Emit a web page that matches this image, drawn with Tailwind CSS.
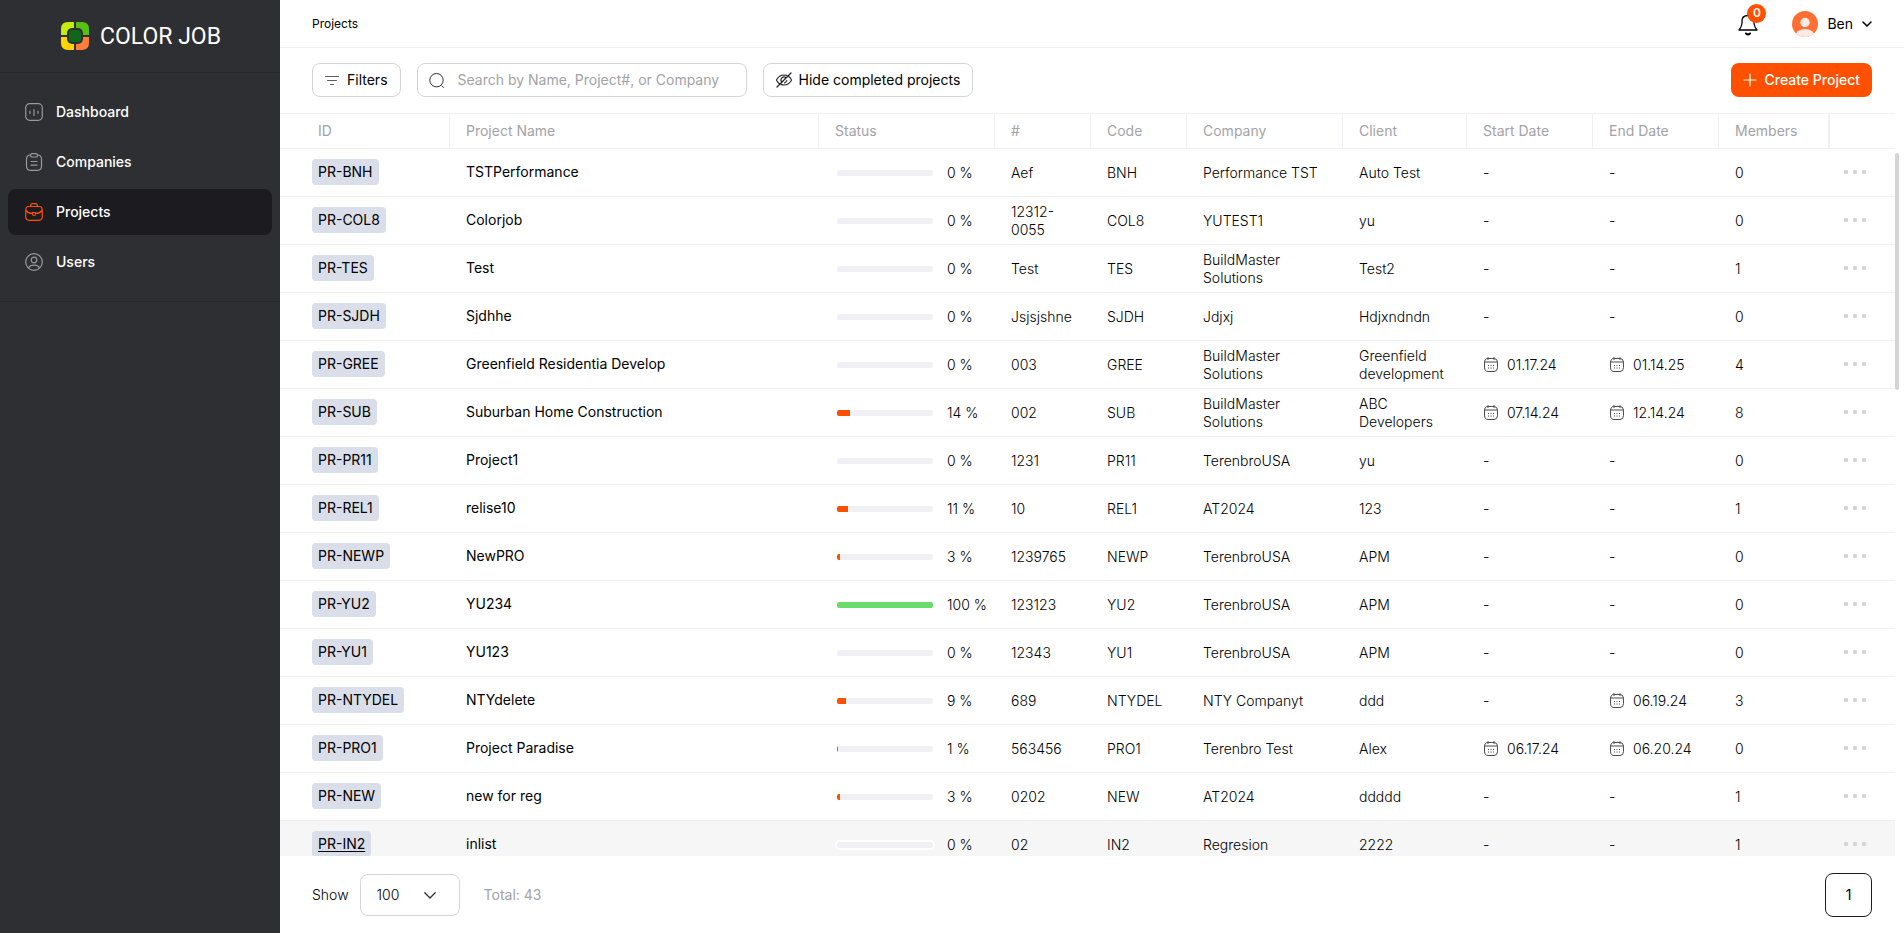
<!DOCTYPE html>
<html lang="en">
<head>
<meta charset="utf-8">
<title>Projects</title>
<script src="https://cdn.jsdelivr.net/npm/@tailwindcss/browser@4"></script>
</head>
<body class="h-screen overflow-hidden bg-white font-['Inter',sans-serif] text-sm text-black">
<svg class="hidden" aria-hidden="true">
  <symbol id="cal" viewBox="0 0 14 15" fill="none" stroke="#4a4b50" stroke-linecap="round">
    <path d="M.5 5.500Q.5 1.500 4 1.500H10Q13.500 1.500 13.500 5.500V10.500Q13.500 14.500 10 14.500H4Q.5 14.500 .5 10.500ZM.5 5H13.500M4 .5V2.500M10 .5V2.500"/>
    <path d="M4 8.500H10.500M4 11H10.500" stroke-dasharray="1 1.500" stroke-linecap="butt"/>
  </symbol>
  <symbol id="dots" viewBox="0 0 24 6" fill="#d4d4d4"><circle cx="3" cy="3" r="2.200"/><circle cx="12" cy="3" r="2.200"/><circle cx="21" cy="3" r="2.200"/></symbol>
</svg>
<div class="flex h-full">
  <aside class="flex w-[280px] shrink-0 flex-col bg-[#2e2f33]">
    <a href="#" class="flex h-[73px] items-center gap-[11px] border-b border-[#27282c] pl-[61px]">
      <svg class="size-7" viewBox="0 0 28 28" aria-hidden="true"><path fill="#c3ec13" d="M13 0H7Q0 0 0 7v6h13z"/><path fill="#56c113" d="M15 0h6q7 0 7 7v6H15z"/><path fill="#ffd400" d="M13 28H7q-7 0-7-7v-6h13z"/><path fill="#ff7f3a" d="M15 28h6q7 0 7-7v-6H15z"/><rect x="7" y="7" width="14" height="14" rx="4" fill="#10661b" stroke="#2e2f33" stroke-width="2"/></svg>
      <span class="pt-px font-['Roboto',sans-serif] text-[23px] leading-7 text-white">COLOR JOB</span>
    </a>
    <nav class="flex flex-col gap-1 border-b border-[#27282c] px-2 py-4 font-medium text-white">
      <a href="#" class="flex h-[46px] items-center gap-[13px] rounded-lg px-[17px]">
        <svg class="size-[18px]" viewBox="0 0 18 18" fill="none" stroke="#98999d" stroke-width="1.200" stroke-linecap="round"><rect x=".7" y=".7" width="16.600" height="16.600" rx="4"/><path d="M5 8v2.500M9 6.500v6M13 8v2.500"/></svg>Dashboard</a>
      <a href="#" class="flex h-[46px] items-center gap-[13px] rounded-lg px-[17px]">
        <svg class="size-[18px]" viewBox="0 0 18 18" fill="none" stroke="#98999d" stroke-width="1.200" stroke-linecap="round"><path d="M5.500 2Q1.500 2 1.500 6v7.300q0 4 4 4h7q4 0 4-4V6q0-4-4-4"/><rect x="5.500" y=".7" width="7" height="3.300" rx="1.600"/><path d="M6 8.500h6M6 12.200h6"/></svg>Companies</a>
      <a href="#" aria-current="page" class="flex h-[46px] items-center gap-[13px] rounded-lg bg-[#1c1b1f] px-[17px]">
        <svg class="size-[18px]" viewBox="0 0 18 18" fill="none" stroke="#ff5000" stroke-width="1.200" stroke-linecap="round"><path d="M.7 7.500Q.7 3.500 3.500 3.500h11q2.800 0 2.800 4v6q0 3.800-3.500 3.800H4.200Q.7 17.300.7 13.500zM5.500 3.500Q5.500.7 7.500.7h3q2 0 2 2.800M.9 7.500q2.600 3 6.300 3M17.100 7.500q-2.600 3-6.300 3"/><path d="M7.300 9.500h3.400v1.200q-.2 1.800-1.700 1.800t-1.700-1.800z"/></svg>Projects</a>
      <a href="#" class="flex h-[46px] items-center gap-[13px] rounded-lg px-[17px]">
        <svg class="size-[18px]" viewBox="0 0 18 18" fill="none" stroke="#98999d" stroke-width="1.200"><circle cx="9" cy="9" r="8.300"/><circle cx="9" cy="7" r="2.800"/><path d="M3.500 15q1.300-2.800 5.500-2.800t5.500 2.800"/></svg>Users</a>
    </nav>
  </aside>
  <main class="flex min-w-0 flex-1 flex-col">
    <header class="flex h-12 shrink-0 items-center justify-between border-b border-[#efeff1] px-8">
      <h1 class="text-xs font-normal">Projects</h1>
      <div class="flex items-center gap-[34px]">
        <button type="button" class="relative" aria-label="Notifications">
          <svg class="h-6 w-5" viewBox="0 0 20 24" fill="none" stroke="#000" stroke-width="1.300" stroke-linecap="round" stroke-linejoin="round"><path d="M1 18h18q-2.500-3-3-6.500V9q0-5.500-6-5.500T4 9v2.500Q3.500 15 1 18z"/><path d="M8 21.500q2 1.800 4 0" stroke-width="2"/></svg>
          <span class="absolute -top-2 left-[9px] flex size-[19px] items-center justify-center rounded-full bg-[#ff5000] text-xs font-semibold text-white">0</span>
        </button>
        <button type="button" class="flex items-center gap-[9px]">
          <svg class="size-[26px]" viewBox="0 0 26 26"><clipPath id="av"><circle cx="13" cy="13" r="13"/></clipPath><g clip-path="url(#av)"><path fill="#ff6f31" d="M0 0h26v26H0z"/><g fill="#fdeae3"><circle cx="13" cy="11.500" r="4.700"/><ellipse cx="13" cy="26" rx="10" ry="8"/></g></g></svg>
          Ben
          <svg class="h-[6px] w-[10px]" viewBox="0 0 10 6" fill="none" stroke="#000" stroke-width="1.500" stroke-linecap="round"><path d="M1 1l4 4 4-4"/></svg>
        </button>
      </div>
    </header>
    <div class="flex shrink-0 gap-4 px-8 pt-[15px] pb-4">
      <button type="button" class="flex h-[34px] items-center gap-2 rounded-lg border border-[#d5d5d8] px-3">
        <svg class="h-[9px] w-[14px]" viewBox="0 0 14 9" stroke="#5b5c60" stroke-linecap="round"><path d="M.5 .5h13M2.500 4.500h9M5.500 8.500h3"/></svg>Filters</button>
      <label class="flex h-[34px] w-[330px] items-center gap-[14px] rounded-lg border border-[#d5d5d8] pl-[11px]">
        <svg class="size-[15px] shrink-0" viewBox="0 0 15 15" fill="none" stroke="#303135"><circle cx="7.500" cy="7.200" r="6.700"/><path d="M13 13l1.500 1.500" stroke-linecap="round"/></svg>
        <input type="text" aria-label="Search" placeholder="Search by Name, Project#, or Company" class="min-w-0 flex-1 outline-none placeholder:text-[#a3a2a7]"></label>
      <button type="button" class="flex h-[34px] items-center gap-[7px] rounded-lg border border-[#d5d5d8] px-3">
        <svg class="size-4" viewBox="0 0 16 16" fill="none" stroke="#1f2023" stroke-width="1.200" stroke-linecap="round"><path d="M12.800 4.500Q14 5.500 15 7q.6 1 0 2-2.600 4-7 4-1.500 0-2.800-.6M10.800 3.400Q9.500 3 8 3 3.600 3 1 7q-.6 1 0 2 .9 1.400 2.200 2.400M5.900 10.100A2.900 2.900 0 0 1 10.100 5.900M10.800 8.500A2.900 2.900 0 0 1 8.500 10.800M15 1 1 15"/></svg>Hide completed projects</button>
      <button type="button" class="ml-auto flex h-[34px] items-center gap-2 rounded-lg bg-[#ff5000] px-3 font-medium text-white">
        <svg class="size-[14px]" viewBox="0 0 14 14" stroke="#fff" stroke-width="1.200" stroke-linecap="round"><path d="M7 1v12M1 7h12"/></svg>Create Project</button>
    </div>
    <section class="relative min-h-0 flex-1 overflow-hidden pr-[9px]">
      <table class="w-full table-fixed border-separate border-spacing-0 text-left">
        <colgroup><col class="w-[170px]"><col><col class="w-[176px]"><col class="w-[96px]"><col class="w-[96px]"><col class="w-[156px]"><col class="w-[124px]"><col class="w-[126px]"><col class="w-[126px]"><col class="w-[111px]"><col class="w-[65px]"></colgroup>
        <thead class="text-[#a3a2a7]">
          <tr>
            <th class="h-9 border-y border-r border-[#efeff4] pl-[38px] font-normal">ID</th>
            <th class="border-y border-r border-[#efeff4] pl-4 font-normal">Project Name</th>
            <th class="border-y border-r border-[#efeff4] pl-4 font-normal">Status</th>
            <th class="border-y border-r border-[#efeff4] pl-4 font-normal">#</th>
            <th class="border-y border-r border-[#efeff4] pl-4 font-normal">Code</th>
            <th class="border-y border-r border-[#efeff4] pl-4 font-normal">Company</th>
            <th class="border-y border-r border-[#efeff4] pl-4 font-normal">Client</th>
            <th class="border-y border-r border-[#efeff4] pl-4 font-normal">Start Date</th>
            <th class="border-y border-r border-[#efeff4] pl-4 font-normal">End Date</th>
            <th class="border-y border-r-2 border-[#efeff4] pl-4 font-normal">Members</th>
            <th class="border-y border-[#efeff4]" aria-label="Actions"></th>
          </tr>
        </thead>
        <tbody id="rows" class="leading-[18px] font-light"></tbody>
      </table>
      <div class="absolute top-10 right-[5px] h-[237px] w-1 rounded-full bg-[#d5d5d5]"></div>
    </section>
    <footer class="flex h-[77px] shrink-0 items-center px-8">
      <label for="size" class="mr-[11px] font-light">Show</label>
      <div class="relative">
        <select id="size" class="h-[42px] w-[100px] appearance-none rounded-lg border border-[#d5d5d8] pl-4 font-light outline-none"><option>100</option></select>
        <svg class="pointer-events-none absolute top-[18px] right-6 h-[7px] w-3" viewBox="0 0 12 7" fill="none" stroke="#303135" stroke-width="1.300" stroke-linecap="round"><path d="M.8 .8 6 6 11.200 .8"/></svg>
      </div>
      <span class="ml-6 text-[#a3a2a7]">Total: 43</span>
      <button type="button" aria-current="page" class="ml-auto h-[44px] w-[47px] rounded-lg border border-[#1c1b1f]">1</button>
    </footer>
  </main>
</div>
<script>
const projects = [
  ['PR-BNH','TSTPerformance',0,'Aef','BNH','Performance TST','Auto Test','','',0],
  ['PR-COL8','Colorjob',0,'12312-0055','COL8','YUTEST1','yu','','',0],
  ['PR-TES','Test',0,'Test','TES','BuildMaster Solutions','Test2','','',1],
  ['PR-SJDH','Sjdhhe',0,'Jsjsjshne','SJDH','Jdjxj','Hdjxndndn','','',0],
  ['PR-GREE','Greenfield Residentia Develop',0,'003','GREE','BuildMaster Solutions','Greenfield development','01.17.24','01.14.25',4],
  ['PR-SUB','Suburban Home Construction',14,'002','SUB','BuildMaster Solutions','ABC Developers','07.14.24','12.14.24',8],
  ['PR-PR11','Project1',0,'1231','PR11','TerenbroUSA','yu','','',0],
  ['PR-REL1','relise10',11,'10','REL1','AT2024','123','','',1],
  ['PR-NEWP','NewPRO',3,'1239765','NEWP','TerenbroUSA','APM','','',0],
  ['PR-YU2','YU234',100,'123123','YU2','TerenbroUSA','APM','','',0],
  ['PR-YU1','YU123',0,'12343','YU1','TerenbroUSA','APM','','',0],
  ['PR-NTYDEL','NTYdelete',9,'689','NTYDEL','NTY Companyt','ddd','','06.19.24',3],
  ['PR-PRO1','Project Paradise',1,'563456','PRO1','Terenbro Test','Alex','06.17.24','06.20.24',0],
  ['PR-NEW','new for reg',3,'0202','NEW','AT2024','ddddd','','',1],
  ['PR-IN2','inlist',0,'02','IN2','Regresion','2222','','',1]
];
const cell = (v, pad = 'pl-4 pr-4') => `<td class="border-b border-[#efeff4] ${pad}">${v}</td>`;
const date = d => d ? cell(`<span class="flex items-center gap-[9px]"><svg class="h-[15px] w-[14px]"><use href="#cal"/></svg>${d}</span>`, 'pl-[17px]') : cell('-');
document.getElementById('rows').innerHTML = projects.map(([id, name, pct, num, code, company, client, start, end, members], i) => {
  const active = i === projects.length - 1;
  return `<tr class="${active ? 'bg-[#f6f6f6]' : ''}">
    <td class="h-12 border-b border-[#efeff4] pb-px pl-8"><a href="#" class="inline-flex h-[26px] items-center rounded bg-[#dadee9] px-[6px] align-middle font-normal ${active ? 'underline underline-offset-2' : ''}">${id}</a></td>
    <td class="border-b border-[#efeff4] pb-px pl-4 font-normal">${name}</td>
    ${cell(`<div class="flex items-center gap-3"><div class="h-[10px] w-[100px] shrink-0 rounded-full border-2 border-white bg-white"><div class="h-full overflow-hidden rounded-xs bg-[#f0f1f5]"><div class="h-full ${pct === 100 ? 'bg-[#68db68]' : 'bg-[#ff5000]'}" style="width:${pct}%"></div></div></div><span class="whitespace-nowrap">${pct} %</span></div>`, 'pl-4')}
    ${cell(num)}${cell(code)}${cell(company)}${cell(client)}${date(start)}${date(end)}${cell(members)}
    <td class="border-b border-[#efeff4] pb-px pl-[13px]"><button type="button" class="block" aria-label="Actions for ${name}"><svg class="h-[6px] w-6"><use href="#dots"/></svg></button></td>
  </tr>`;
}).join('');
</script>
</body>
</html>
